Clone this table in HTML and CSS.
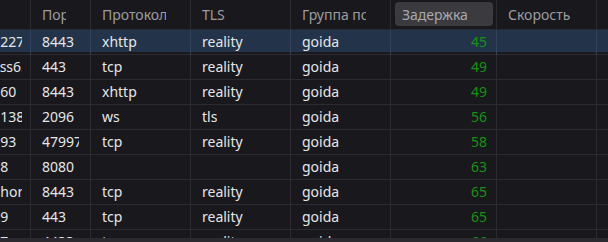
FILE: index.html
```html
<!DOCTYPE html>
<html lang="ru">
<head>
<meta charset="utf-8">
<title>Профили</title>
<link rel="stylesheet" href="styles.css">
</head>
<body>
<div class="view">
  <div class="table">
    <div class="row head">
      <div class="hcell"><div class="label"><span>Адрес</span></div></div>
      <div class="hcell"><div class="label"><span>Порт</span></div></div>
      <div class="hcell"><div class="label"><span>Протокол</span></div></div>
      <div class="hcell"><div class="label"><span>TLS</span></div></div>
      <div class="hcell"><div class="label"><span>Группа подписки</span></div></div>
      <div class="hcell sorted"><div class="label"><span>Задержка</span></div></div>
      <div class="hcell"><div class="label"><span>Скорость</span></div></div>
      <div class="hcell"><div class="label"><span></span></div></div>
    </div>

    <div class="row sel">
      <div class="cell c0"><span>185.215.164.2277</span></div>
      <div class="cell"><span>8443</span></div>
      <div class="cell"><span>xhttp</span></div>
      <div class="cell"><span>reality</span></div>
      <div class="cell"><span>goida</span></div>
      <div class="cell lat"><span>45</span></div>
      <div class="cell"><span></span></div>
      <div class="cell"><span></span></div>
    </div>
    <div class="row">
      <div class="cell c0"><span>fr2.goida-vless6.xyz</span></div>
      <div class="cell"><span>443</span></div>
      <div class="cell"><span>tcp</span></div>
      <div class="cell"><span>reality</span></div>
      <div class="cell"><span>goida</span></div>
      <div class="cell lat"><span>49</span></div>
      <div class="cell"><span></span></div>
      <div class="cell"><span></span></div>
    </div>
    <div class="row">
      <div class="cell c0"><span>185.215.164.60</span></div>
      <div class="cell"><span>8443</span></div>
      <div class="cell"><span>xhttp</span></div>
      <div class="cell"><span>reality</span></div>
      <div class="cell"><span>goida</span></div>
      <div class="cell lat"><span>49</span></div>
      <div class="cell"><span></span></div>
      <div class="cell"><span></span></div>
    </div>
    <div class="row">
      <div class="cell c0"><span>185.215.164.138</span></div>
      <div class="cell"><span>2096</span></div>
      <div class="cell"><span>ws</span></div>
      <div class="cell"><span>tls</span></div>
      <div class="cell"><span>goida</span></div>
      <div class="cell lat"><span>56</span></div>
      <div class="cell"><span></span></div>
      <div class="cell"><span></span></div>
    </div>
    <div class="row">
      <div class="cell c0"><span>94.131.119.193</span></div>
      <div class="cell"><span>47997</span></div>
      <div class="cell"><span>tcp</span></div>
      <div class="cell"><span>reality</span></div>
      <div class="cell"><span>goida</span></div>
      <div class="cell lat"><span>58</span></div>
      <div class="cell"><span></span></div>
      <div class="cell"><span></span></div>
    </div>
    <div class="row">
      <div class="cell c0"><span>185.215.164.8</span></div>
      <div class="cell"><span>8080</span></div>
      <div class="cell"><span></span></div>
      <div class="cell"><span></span></div>
      <div class="cell"><span>goida</span></div>
      <div class="cell lat"><span>63</span></div>
      <div class="cell"><span></span></div>
      <div class="cell"><span></span></div>
    </div>
    <div class="row">
      <div class="cell c0"><span>de-frankfurt.horizon.net</span></div>
      <div class="cell"><span>8443</span></div>
      <div class="cell"><span>tcp</span></div>
      <div class="cell"><span>reality</span></div>
      <div class="cell"><span>goida</span></div>
      <div class="cell lat"><span>65</span></div>
      <div class="cell"><span></span></div>
      <div class="cell"><span></span></div>
    </div>
    <div class="row">
      <div class="cell c0"><span>109.120.135.9</span></div>
      <div class="cell"><span>443</span></div>
      <div class="cell"><span>tcp</span></div>
      <div class="cell"><span>reality</span></div>
      <div class="cell"><span>goida</span></div>
      <div class="cell lat"><span>65</span></div>
      <div class="cell"><span></span></div>
      <div class="cell"><span></span></div>
    </div>
    <div class="row">
      <div class="cell c0"><span>185.215.164.7</span></div>
      <div class="cell"><span>4433</span></div>
      <div class="cell"><span>tcp</span></div>
      <div class="cell"><span>reality</span></div>
      <div class="cell"><span>goida</span></div>
      <div class="cell lat"><span>66</span></div>
      <div class="cell"><span></span></div>
      <div class="cell"><span></span></div>
    </div>
  </div>
</div>
<div class="hbar"></div>
</body>
</html>
```

FILE: styles.css
```css
html, body {
  margin: 0;
  padding: 0;
  background: #19181d;
  overflow: hidden;
}

body {
  font-family: "Noto Sans", "Open Sans", sans-serif;
  font-size: 14px;
  color: #e6e6e6;
}

.view {
  height: 238px;
  overflow: hidden;
}

.table {
  margin-left: -94px;
}

.row {
  display: grid;
  grid-template-columns: 125px 60px 100px 100px 100px 106px 100px 100px;
}

.hcell,
.cell {
  box-sizing: border-box;
  border-right: 1px solid #2c2b31;
  border-bottom: 1px solid #2c2b31;
  min-width: 0;
}

.hcell {
  height: 30px;
  padding: 2px 3px 3px 4px;
}

.label {
  height: 100%;
  box-sizing: border-box;
  display: flex;
  align-items: center;
  padding: 0 21px 0 7px;
  border-radius: 4px;
  color: #9d9d9f;
}

.label span,
.cell span {
  overflow: hidden;
  white-space: nowrap;
  min-width: 0;
}

.sorted .label {
  background: #3a3a3f;
  color: #a9a9ab;
}

.cell {
  height: 25px;
  padding: 0 11px 0 11px;
  display: flex;
  align-items: center;
  padding-bottom: 1px;
}

.cell.c0 {
  padding-right: 8px;
}

.cell.lat {
  justify-content: flex-end;
  padding-right: 9px;
  color: #119411;
}

.row.sel .cell {
  background: linear-gradient(#23344a 0 22px, transparent 22px);
  border-right-color: #33445a;
}

.hbar {
  height: 4px;
  background: #2b2a30;
}
```
